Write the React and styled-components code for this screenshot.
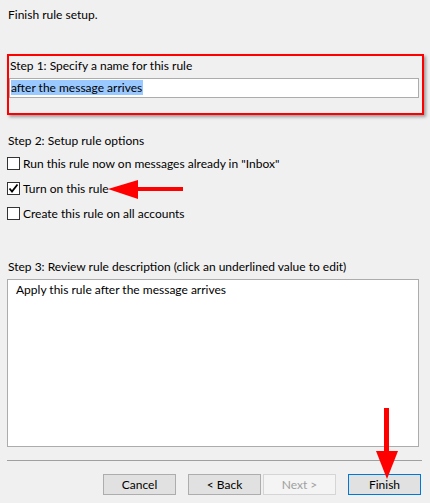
import styled, { createGlobalStyle } from "styled-components";

const Global = createGlobalStyle`
  html, body { margin: 0; padding: 0; background: #f0f0f0; }
  * { box-sizing: border-box; }
`;

const Page = styled.div`
  position: relative;
  width: 430px;
  height: 503px;
  overflow: hidden;
  background: #f0f0f0;
  font-family: Lato, "Open Sans", "Noto Sans", sans-serif;
  font-size: 12px;
  color: #000;
  padding: 7px 8px 0 7px;
`;

const Title = styled.div`
  line-height: 16px;
  padding-left: 1px;
`;

const NameBox = styled.div`
  margin-top: 31px;
  width: 417px;
  height: 61px;
  border: 2px solid #ff0000;
  box-shadow: 2px 2px 3px rgba(0, 0, 0, 0.35);
  padding: 2px 0 0 0;
`;

const Label = styled.div`
  line-height: 16px;
  padding-left: ${(p) => p.indent || 1}px;
  margin-top: ${(p) => p.top || 0}px;
`;

const NameInput = styled.div`
  margin-top: 4px;
  width: 410px;
  height: 20px;
  background: #fff;
  border: 1px solid #acacac;
  padding: 1px 0 0 1px;
  line-height: 16px;
`;

const Selected = styled.span`
  background: #99c9ff;
  padding-right: 1px;
`;

const Options = styled.div`
  margin-top: 6px;
  display: flex;
  flex-direction: column;
  gap: 8px;
`;

const OptionRow = styled.label`
  display: flex;
  align-items: center;
  gap: 3px;
  height: 17px;
`;

const Box = styled.span`
  width: 13px;
  height: 13px;
  border: 1px solid #333;
  background: #fff;
  display: flex;
  align-items: center;
  justify-content: center;
`;

const Description = styled.div`
  margin-top: 4px;
  width: 412px;
  height: 168px;
  background: #fff;
  border: 1px solid #acacac;
  padding: 2px 0 0 8px;
  line-height: 16px;
`;

const Divider = styled.div`
  margin-top: 13px;
  width: 415px;
  height: 1px;
  background: #a0a0a0;
`;

const ButtonBar = styled.div`
  margin-top: 13px;
  display: flex;
  justify-content: flex-end;
  padding-right: 1px;
`;

const Button = styled.button`
  width: 73px;
  height: 21px;
  margin-left: ${(p) => p.gap || 0}px;
  font: inherit;
  font-size: 12px;
  line-height: 16px;
  padding: 0;
  background: ${(p) => (p.disabled ? "#f4f4f4" : "#e1e1e1")};
  color: ${(p) => (p.disabled ? "#a0a0a0" : "#000")};
  border: 1px solid ${(p) => (p.primary ? "#0078d7" : p.disabled ? "#d5d5d5" : "#adadad")};
`;

const Arrow = styled.svg`
  position: absolute;
  left: ${(p) => p.x}px;
  top: ${(p) => p.y}px;
  pointer-events: none;
`;

function Check({ checked }) {
  return (
    <Box>
      {checked && (
        <svg width="11" height="11" viewBox="0 0 11 11">
          <path d="M1.5 5.5 L4 8.5 L9.5 1.5" fill="none" stroke="#000" strokeWidth="1.8" />
        </svg>
      )}
    </Box>
  );
}

export default function App() {
  return (
    <Page>
      <Global />
      <Title>Finish rule setup.</Title>
      <NameBox>
        <Label indent={0}>Step 1: Specify a name for this rule</Label>
        <NameInput>
          <Selected>after the message arrives</Selected>
        </NameInput>
      </NameBox>
      <Label top={18}>Step 2: Setup rule options</Label>
      <Options>
        <OptionRow>
          <Check />
          Run this rule now on messages already in "Inbox"
        </OptionRow>
        <OptionRow>
          <Check checked />
          Turn on this rule
        </OptionRow>
        <OptionRow>
          <Check />
          Create this rule on all accounts
        </OptionRow>
      </Options>
      <Label top={37}>Step 3: Review rule description (click an underlined value to edit)</Label>
      <Description>Apply this rule after the message arrives</Description>
      <Divider />
      <ButtonBar>
        <Button>Cancel</Button>
        <Button gap={12}>&lt; Back</Button>
        <Button gap={2} disabled>Next &gt;</Button>
        <Button gap={12} primary>Finish</Button>
      </ButtonBar>
      <Arrow x={106} y={178} width="80" height="24" viewBox="0 0 80 24">
        <polygon points="2,11 32,2 32,21" fill="#ff0000" />
        <rect x="30" y="9" width="47" height="4" fill="#ff0000" />
      </Arrow>
      <Arrow x={374} y={406} width="26" height="76" viewBox="0 0 26 76">
        <rect x="10" y="2" width="5" height="46" fill="#ff0000" />
        <polygon points="2,45 24,45 13,73" fill="#ff0000" />
      </Arrow>
    </Page>
  );
}
